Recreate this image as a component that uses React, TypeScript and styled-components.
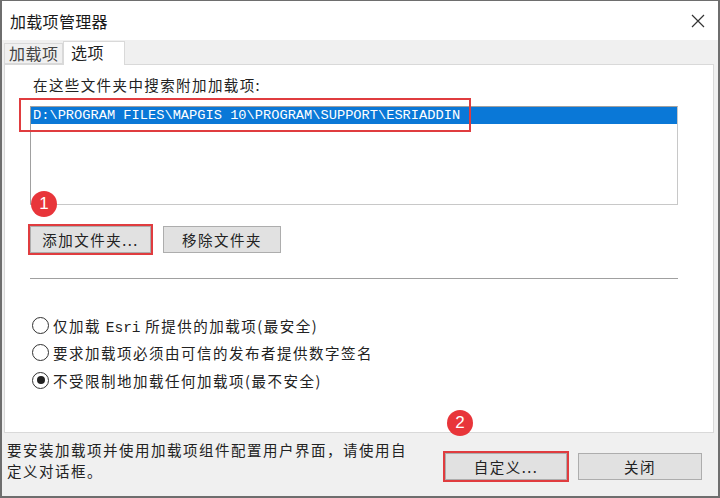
import React from "react";
import styled, { createGlobalStyle } from "styled-components";

const GlobalStyle = createGlobalStyle`
  html, body {
    margin: 0;
    padding: 0;
    background: #ffffff;
  }
  body {
    font-family: "Noto Sans CJK SC", "Noto Sans", sans-serif;
    color: #1a1a1a;
  }
`;

const Window = styled.div`
  box-sizing: border-box;
  width: 720px;
  height: 498px;
  border: 2px solid #6e6e6e;
  border-top-width: 1px;
  display: flex;
  flex-direction: column;
  background: #f0f0f0;
  overflow: hidden;
`;

const TitleBar = styled.div`
  height: 39px;
  flex: none;
  background: #ffffff;
  display: flex;
  align-items: center;
  justify-content: space-between;
  padding: 0 13px 0 8px;
`;

const Title = styled.div`
  font-size: 16px;
  color: #1a1a1a;
  letter-spacing: 0.3px;
`;

const TabStrip = styled.div`
  height: 24px;
  flex: none;
  display: flex;
  align-items: flex-end;
  padding-left: 2px;
`;

const Tab = styled.div<{ $active?: boolean }>`
  box-sizing: border-box;
  width: ${(p) => (p.$active ? "62px" : "59px")};
  height: ${(p) => (p.$active ? "24px" : "21px")};
  padding-left: ${(p) => (p.$active ? "7px" : "4px")};
  margin-bottom: ${(p) => (p.$active ? "-1px" : "0")};
  background: ${(p) => (p.$active ? "#ffffff" : "#f0f0f0")};
  border: 1px solid #d9d9d9;
  border-bottom: ${(p) => (p.$active ? "none" : "1px solid #d9d9d9")};
  font-size: 16px;
  line-height: ${(p) => (p.$active ? "21px" : "19px")};
  letter-spacing: 0.5px;
  color: ${(p) => (p.$active ? "#222" : "#444")};
  position: relative;
  z-index: ${(p) => (p.$active ? 2 : 1)};
`;

const Body = styled.div`
  flex: none;
  height: 369px;
  padding: 0 4px 0 2px;
  display: flex;
`;

const Panel = styled.div`
  position: relative;
  flex: 1;
  box-sizing: border-box;
  background: #ffffff;
  border: 1px solid #d9d9d9;
  padding: 11px 35px 0 25px;
  display: flex;
  flex-direction: column;
`;

const Label = styled.div`
  font-size: 14.5px;
  line-height: 18px;
  letter-spacing: 1.4px;
  padding-left: 3px;
  color: #222;
`;

const ListBox = styled.div`
  position: relative;
  margin-top: 12px;
  height: 99px;
  box-sizing: border-box;
  border: 1px solid #a0a0a0;
  border-right-color: #c8c8c8;
  border-bottom-color: #c8c8c8;
  background: #ffffff;
`;

const ListItem = styled.div<{ $selected?: boolean }>`
  height: 17px;
  padding-left: 2px;
  background: ${(p) => (p.$selected ? "#0a78d7" : "transparent")};
  color: ${(p) => (p.$selected ? "#ffffff" : "#222")};
  font-family: "Liberation Mono", "DejaVu Sans Mono", monospace;
  font-size: 13.7px;
  line-height: 17px;
  white-space: nowrap;
`;

const Mark = styled.div`
  position: absolute;
  border: 2px solid #e03c3f;
  pointer-events: none;
`;

const Badge = styled.div`
  position: absolute;
  width: 26px;
  height: 26px;
  border-radius: 50%;
  background: #e8353a;
  color: #ffffff;
  font-family: "Liberation Sans", sans-serif;
  font-size: 17px;
  line-height: 26px;
  text-align: center;
  z-index: 3;
`;

const ButtonRow = styled.div`
  display: flex;
  align-items: center;
  gap: 12px;
  margin-top: 21px;
`;

const Highlight = styled.div`
  position: relative;
  display: flex;
  border: 2px solid #e03c3f;
  margin: -2px;
`;

const Button = styled.div<{ $w: number }>`
  box-sizing: border-box;
  width: ${(p) => p.$w}px;
  height: 27px;
  background: #e1e1e1;
  border: 1px solid #adadad;
  display: flex;
  align-items: center;
  justify-content: center;
  font-size: 14.5px;
  letter-spacing: 1.5px;
  color: #222;
`;

const Separator = styled.div`
  margin-top: 25px;
  height: 1px;
  background: #a0a0a0;
`;

const RadioGroup = styled.div`
  margin-top: 37px;
  display: flex;
  flex-direction: column;
  gap: 9.5px;
  padding-left: 2px;
`;

const RadioRow = styled.div`
  display: flex;
  align-items: center;
  gap: 4px;
  height: 18px;
  font-size: 14.5px;
  letter-spacing: 1.5px;
  color: #222;
`;

const RadioCircle = styled.div<{ $checked?: boolean }>`
  box-sizing: border-box;
  width: 17px;
  height: 17px;
  border-radius: 50%;
  border: 1px solid #333;
  background: #fff;
  display: flex;
  align-items: center;
  justify-content: center;
  &::after {
    content: "";
    width: 8px;
    height: 8px;
    border-radius: 50%;
    background: ${(p) => (p.$checked ? "#222" : "transparent")};
  }
`;

const Mono = styled.span`
  font-family: "Liberation Mono", monospace;
  letter-spacing: 0;
`;

const Footer = styled.div`
  flex: 1;
  display: flex;
  align-items: flex-start;
  padding: 6px 0 0 5px;
  position: relative;
`;

const FooterText = styled.div`
  width: 410px;
  font-size: 14.5px;
  line-height: 21px;
  letter-spacing: 1.5px;
  color: #222;
`;

const FooterButtons = styled.div`
  display: flex;
  gap: 11px;
  margin-left: 28px;
  margin-top: 14px;
`;

function CloseIcon() {
  return (
    <svg width="14" height="14" viewBox="0 0 14 14">
      <path d="M1 1 L13 13 M13 1 L1 13" stroke="#333" strokeWidth="1.2" fill="none" />
    </svg>
  );
}

export default function App() {
  return (
    <>
      <GlobalStyle />
      <Window>
        <TitleBar>
          <Title>加载项管理器</Title>
          <CloseIcon />
        </TitleBar>
        <TabStrip>
          <Tab>加载项</Tab>
          <Tab $active>选项</Tab>
        </TabStrip>
        <Body>
          <Panel>
            <Label>在这些文件夹中搜索附加加载项:</Label>
            <ListBox>
              <ListItem $selected>
                D:\PROGRAM FILES\MAPGIS 10\PROGRAM\SUPPORT\ESRIADDIN
              </ListItem>
              <Mark style={{ left: -12, top: -9, width: 448, height: 30 }} />
              <Badge style={{ left: 0, top: 84 }}>1</Badge>
            </ListBox>
            <ButtonRow>
              <Highlight>
                <Button $w={121}>添加文件夹...</Button>
              </Highlight>
              <Button $w={118}>移除文件夹</Button>
            </ButtonRow>
            <Separator />
            <RadioGroup>
              <RadioRow>
                <RadioCircle />
                <span>
                  仅加载 <Mono>Esri</Mono> 所提供的加载项(最安全)
                </span>
              </RadioRow>
              <RadioRow>
                <RadioCircle />
                <span>要求加载项必须由可信的发布者提供数字签名</span>
              </RadioRow>
              <RadioRow>
                <RadioCircle $checked />
                <span>不受限制地加载任何加载项(最不安全)</span>
              </RadioRow>
            </RadioGroup>
          </Panel>
        </Body>
        <Footer>
          <FooterText>
            要安装加载项并使用加载项组件配置用户界面，请使用自定义对话框。
          </FooterText>
          <FooterButtons>
            <Highlight>
              <Button $w={122}>自定义...</Button>
              <Badge style={{ left: 2, top: -43 }}>2</Badge>
            </Highlight>
            <Button $w={124}>关闭</Button>
          </FooterButtons>
        </Footer>
      </Window>
    </>
  );
}
